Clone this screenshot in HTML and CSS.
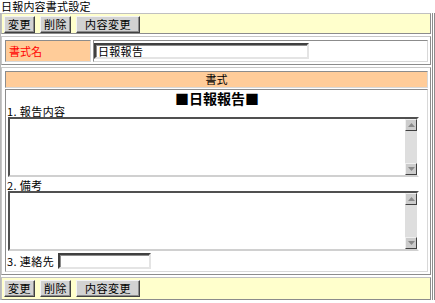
FILE: index.html
```html
<!DOCTYPE html>
<html lang="ja">
<head>
<meta charset="utf-8">
<title>日報内容書式設定</title>
<link rel="stylesheet" href="styles.css">
</head>
<body>
<div class="title">日報内容書式設定</div>
<div class="frame">
  <div class="toolbar">
    <button class="btn">変更</button>
    <button class="btn">削除</button>
    <button class="btn wide">内容変更</button>
  </div>
  <div class="panel">
    <div class="name-row">
      <div class="label-cell">書式名</div>
      <div class="value-cell"><input class="field name-input" type="text" value="日報報告"></div>
    </div>
  </div>
  <div class="panel">
    <div class="head-cell">書式</div>
    <div class="body-cell">
      <div class="doc-title">■日報報告■</div>
      <div class="field-label">1. 報告内容</div>
      <div class="memo">
        <textarea class="memo-text"></textarea>
        <div class="sb">
          <div class="sb-btn"><svg width="7" height="4" viewBox="0 0 7 4"><polygon points="0,4 7,4 3.5,0" fill="#8a8a8a"/></svg></div>
          <div class="sb-track"></div>
          <div class="sb-btn"><svg width="7" height="4" viewBox="0 0 7 4"><polygon points="0,0 7,0 3.5,4" fill="#8a8a8a"/></svg></div>
        </div>
      </div>
      <div class="field-label">2. 備考</div>
      <div class="memo">
        <textarea class="memo-text"></textarea>
        <div class="sb">
          <div class="sb-btn"><svg width="7" height="4" viewBox="0 0 7 4"><polygon points="0,4 7,4 3.5,0" fill="#8a8a8a"/></svg></div>
          <div class="sb-track"></div>
          <div class="sb-btn"><svg width="7" height="4" viewBox="0 0 7 4"><polygon points="0,0 7,0 3.5,4" fill="#8a8a8a"/></svg></div>
        </div>
      </div>
      <div class="contact-row">
        <span class="field-label inline">3. 連絡先</span>
        <input class="field contact-input" type="text">
      </div>
    </div>
  </div>
  <div class="toolbar bottom">
    <button class="btn">変更</button>
    <button class="btn">削除</button>
    <button class="btn wide">内容変更</button>
  </div>
</div>
</body>
</html>
```

FILE: styles.css
```css
* { box-sizing: border-box; }
html, body { margin: 0; padding: 0; background: #ffffff; }
body {
  font-family: "Noto Sans CJK JP", "DejaVu Sans", sans-serif;
  font-size: 11px;
  color: #000;
  width: 435px;
  height: 303px;
  overflow: hidden;
}
.title {
  height: 13px;
  padding: 0 0 0 1px;
  line-height: 13px;
  font-size: 11px;
  letter-spacing: 0.2px;
  white-space: nowrap;
}
.frame {
  width: 435px;
  border-left: 1px solid #b8b8b8;
  border-right: 3px double #8c8c8c;
  padding-right: 1px;
  display: flex;
  flex-direction: column;
  gap: 2px;
}
.toolbar {
  height: 21px;
  background: #ffffcc;
  border: 1px solid;
  border-color: #c0c0c0 #8c8c8c #8c8c8c #c0c0c0;
  padding: 2px 2px;
  display: flex;
  gap: 5px;
  align-items: flex-start;
}
.toolbar.bottom { height: 23px; padding-top: 2px; }
.btn {
  font-family: inherit;
  font-size: 11px;
  line-height: 13px;
  height: 17px;
  margin: 0;
  padding: 0 3px;
  background: #d2d2d2;
  color: #000;
  border: 1px solid;
  border-color: #f4f4f4 #404040 #404040 #f4f4f4;
  box-shadow: inset -1px -1px 0 #8c8c8c;
  min-width: 30px;
  letter-spacing: 0.5px;
}
.btn.wide { width: 64px; }
.panel {
  border: 1px solid;
  border-color: #c8c8c8 #8c8c8c #8c8c8c #c8c8c8;
  padding: 3px 2px 2px 3px;
}
.name-row {
  display: flex;
  gap: 2px;
  height: 22px;
}
.label-cell {
  width: 86px;
  background: #ffcc99;
  color: #ff0000;
  border: 1px solid;
  border-color: #8c8c8c #d8d8d8 #d8d8d8 #8c8c8c;
  padding-left: 3px;
  display: flex;
  align-items: center;
}
.value-cell {
  flex: 1;
  border: 1px solid;
  border-color: #8c8c8c #d8d8d8 #d8d8d8 #8c8c8c;
  display: flex;
  align-items: center;
}
.field {
  font-family: inherit;
  font-size: 11px;
  height: 16px;
  margin: 0;
  padding: 0 2px;
  border: 2px solid;
  border-color: #404040 #e4e4e4 #e4e4e4 #404040;
  box-shadow: inset 1px 1px 0 #8c8c8c;
  background: #fff;
  outline: none;
}
.name-input { width: 215px; letter-spacing: 0.3px; }
.head-cell {
  height: 17px;
  background: #ffcc99;
  border: 1px solid;
  border-color: #8c8c8c #d8d8d8 #d8d8d8 #8c8c8c;
  text-align: center;
  line-height: 14px;
  color: #000;
}
.body-cell {
  margin-top: 1px;
  border: 1px solid;
  border-color: #8c8c8c #d8d8d8 #d8d8d8 #8c8c8c;
  padding: 0 0 1px 1px;
}
.doc-title {
  text-align: center;
  font-size: 14px;
  font-weight: bold;
  line-height: 16px;
  height: 15px;
  white-space: nowrap;
}
.field-label {
  display: block;
  height: 12px;
  line-height: 12px;
  font-size: 11px;
  letter-spacing: 0.4px;
}
.field-label.inline { display: inline-block; height: auto; }
.memo {
  margin-left: 1px;
  width: 411px;
  height: 60px;
  display: flex;
  border: 2px solid;
  border-color: #505050 #ffffff #d0d0d0 #505050;
}
.memo + .field-label { margin-top: 2px; }
.memo-text {
  flex: 1;
  border: none;
  resize: none;
  outline: none;
  margin: 0;
  padding: 0;
  font-family: inherit;
  font-size: 11px;
  background: #fff;
}
.sb {
  width: 12px;
  display: flex;
  flex-direction: column;
  background: #dedede;
}
.sb-btn {
  height: 12px;
  background: #cccccc;
  border: 1px solid;
  border-color: #f0f0f0 #404040 #404040 #f0f0f0;
  display: flex;
  align-items: center;
  justify-content: center;
}
.sb-track { flex: 1; }
.contact-row {
  display: flex;
  align-items: center;
  gap: 4px;
  height: 19px;
}
.contact-input { width: 93px; }
```
